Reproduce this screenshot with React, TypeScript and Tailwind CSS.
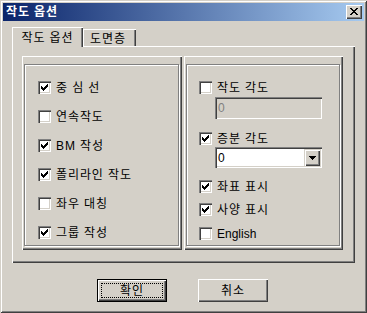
import React from "react";

function Check({ checked }: { checked: boolean }) {
  return (
    <div className="relative w-[13px] h-[13px] shrink-0 bg-white shadow-[inset_1px_1px_0_#808080,inset_2px_2px_0_#404040,inset_-1px_-1px_0_#ffffff,inset_-2px_-2px_0_#d4d0c8]">
      {checked && (
        <svg className="absolute left-0 top-0" width="13" height="13" viewBox="0 0 13 13" shapeRendering="crispEdges">
          <path d="M9 3h1v1H9zM8 4h2v1H8zM3 5h1v1H3zM7 5h3v1H7zM3 6h2v1H3zM6 6h3v1H6zM3 7h5v1H3zM4 8h3v1H4zM5 9h1v1H5z" fill="#000" />
        </svg>
      )}
    </div>
  );
}

function Row({ checked, label, latin }: { checked: boolean; label: string; latin?: boolean }) {
  return (
    <div className="flex items-center h-[13px]">
      <Check checked={checked} />
      <span
        className={
          latin
            ? "ml-[5px] text-[12px] leading-none text-black whitespace-pre"
            : "ml-[5px] text-[12px] leading-none text-black whitespace-pre tracking-[0.9px]"
        }
      >
        {label}
      </span>
    </div>
  );
}

export default function App() {
  return (
    <div className="w-[367px] h-[313px] bg-[#d4d0c8] p-[3px] flex flex-col font-['Liberation_Sans','Noto_Sans_CJK_KR',sans-serif] shadow-[inset_1px_1px_0_#d4d0c8,inset_-1px_-1px_0_#404040,inset_2px_2px_0_#ffffff,inset_-2px_-2px_0_#808080]">
      {/* Title bar */}
      <div className="h-[18px] flex items-center justify-between bg-[linear-gradient(to_right,#0a246a,#a6caf0)]">
        <span className="pl-[3px] text-[12px] font-bold text-white leading-none whitespace-pre tracking-[0.9px]">작도 옵션</span>
        <div className="mr-[2px] w-[16px] h-[14px] bg-[#d4d0c8] flex items-center justify-center shadow-[inset_1px_1px_0_#ffffff,inset_-1px_-1px_0_#404040,inset_-2px_-2px_0_#808080]">
          <svg width="8" height="7" viewBox="0 0 8 7" shapeRendering="crispEdges" className="-ml-[1px] -mt-[1px]">
            <path d="M0 0h2v1H0zM6 0h2v1H6zM1 1h2v1H1zM5 1h2v1H5zM2 2h4v1H2zM3 3h2v1H3zM2 4h4v1H2zM1 5h2v1H1zM5 5h2v1H5zM0 6h2v1H0zM6 6h2v1H6z" fill="#000" />
          </svg>
        </div>
      </div>

      {/* Tabs */}
      <div className="ml-[9px] mt-[6px] h-[19px] flex items-end">
        <div className="relative z-10 -mb-[1px] w-[71px] h-[20px] bg-[#d4d0c8] flex items-center justify-center shadow-[inset_1px_1px_0_#ffffff,inset_-1px_0_0_#404040,inset_-2px_0_0_#808080]">
          <span className="text-[12px] leading-none text-black whitespace-pre pt-[1px] tracking-[0.9px]">작도 옵션</span>
        </div>
        <div className="w-[53px] h-[17px] bg-[#d4d0c8] flex items-center justify-center shadow-[inset_1px_1px_0_#ffffff,inset_-1px_0_0_#404040,inset_-2px_0_0_#808080]">
          <span className="text-[12px] leading-none text-black whitespace-pre pt-[2px] -ml-[3px] tracking-[0.9px]">도면층</span>
        </div>
      </div>

      {/* Panel */}
      <div className="ml-[9px] w-[343px] h-[217px] flex gap-[2px] pl-[10px] pt-[10px] shadow-[inset_1px_1px_0_#ffffff,inset_-1px_-1px_0_#404040,inset_-2px_-2px_0_#808080]">
        {/* Left group */}
        <div className="w-[160px] h-[194px] pt-[8px] pl-[2px] shadow-[inset_1px_1px_0_#ffffff,inset_-1px_-1px_0_#404040,inset_-2px_-2px_0_#808080]">
          <div className="w-[155px] h-[182px] border border-[#808080] shadow-[inset_1px_1px_0_#ffffff,1px_1px_0_#ffffff] pl-[13px] pt-[16px] flex flex-col gap-[16px]">
            <Row checked label="중 심 선" />
            <Row checked={false} label="연속작도" />
            <Row checked label="BM 작성" />
            <Row checked label="폴리라인 작도" />
            <Row checked={false} label="좌우 대칭" />
            <Row checked label="그룹 작성" />
          </div>
        </div>
        {/* Right group */}
        <div className="w-[159px] h-[194px] pt-[8px] pl-[2px] shadow-[inset_1px_1px_0_#ffffff,inset_-1px_-1px_0_#404040,inset_-2px_-2px_0_#808080]">
          <div className="w-[154px] h-[182px] border border-[#808080] shadow-[inset_1px_1px_0_#ffffff,1px_1px_0_#ffffff] pl-[12px] pt-[16px] flex flex-col">
            <Row checked={false} label="작도 각도" />
            <div className="mt-[3px] ml-[16px] w-[107px] h-[22px] bg-[#d4d0c8] flex items-center pl-[3px] shadow-[inset_1px_1px_0_#808080,inset_2px_2px_0_#404040,inset_-1px_-1px_0_#ffffff,inset_-2px_-2px_0_#d4d0c8]">
              <span className="text-[12px] leading-none text-[#808080]">0</span>
            </div>
            <div className="mt-[13px]">
              <Row checked label="증분 각도" />
            </div>
            <div className="mt-[2px] ml-[16px] w-[107px] h-[21px] bg-white flex items-start justify-between pl-[3px] pr-[2px] pt-[2px] shadow-[inset_1px_1px_0_#808080,inset_2px_2px_0_#404040,inset_-1px_-1px_0_#ffffff,inset_-2px_-2px_0_#d4d0c8]">
              <span className="text-[12px] leading-none text-black mt-[3px]">0</span>
              <div className="w-[16px] h-[17px] bg-[#d4d0c8] flex items-center justify-center shadow-[inset_1px_1px_0_#d4d0c8,inset_2px_2px_0_#ffffff,inset_-1px_-1px_0_#404040,inset_-2px_-2px_0_#808080]">
                <svg width="7" height="4" viewBox="0 0 7 4" shapeRendering="crispEdges">
                  <path d="M0 0h7v1H0zM1 1h5v1H1zM2 2h3v1H2zM3 3h1v1H3z" fill="#000" />
                </svg>
              </div>
            </div>
            <div className="mt-[12px]">
              <Row checked label="좌표 표시" />
            </div>
            <div className="mt-[10px]">
              <Row checked label="사양 표시" />
            </div>
            <div className="mt-[11px]">
              <Row checked={false} label="English" latin />
            </div>
          </div>
        </div>
      </div>

      {/* Buttons */}
      <div className="mt-[16px] ml-[94px] flex gap-[31px]">
        <div className="w-[70px] h-[23px] bg-[#d4d0c8] border border-black flex items-center justify-center p-[3px] shadow-[inset_1px_1px_0_#ffffff,inset_-1px_-1px_0_#404040,inset_-2px_-2px_0_#808080]">
          <div className="w-full h-full border border-dotted border-black flex items-center justify-center">
            <span className="text-[12px] leading-none text-black tracking-[0.9px]">확인</span>
          </div>
        </div>
        <div className="w-[70px] h-[23px] bg-[#d4d0c8] flex items-center justify-center shadow-[inset_1px_1px_0_#ffffff,inset_-1px_-1px_0_#404040,inset_-2px_-2px_0_#808080]">
          <span className="text-[12px] leading-none text-black tracking-[0.9px]">취소</span>
        </div>
      </div>
    </div>
  );
}
